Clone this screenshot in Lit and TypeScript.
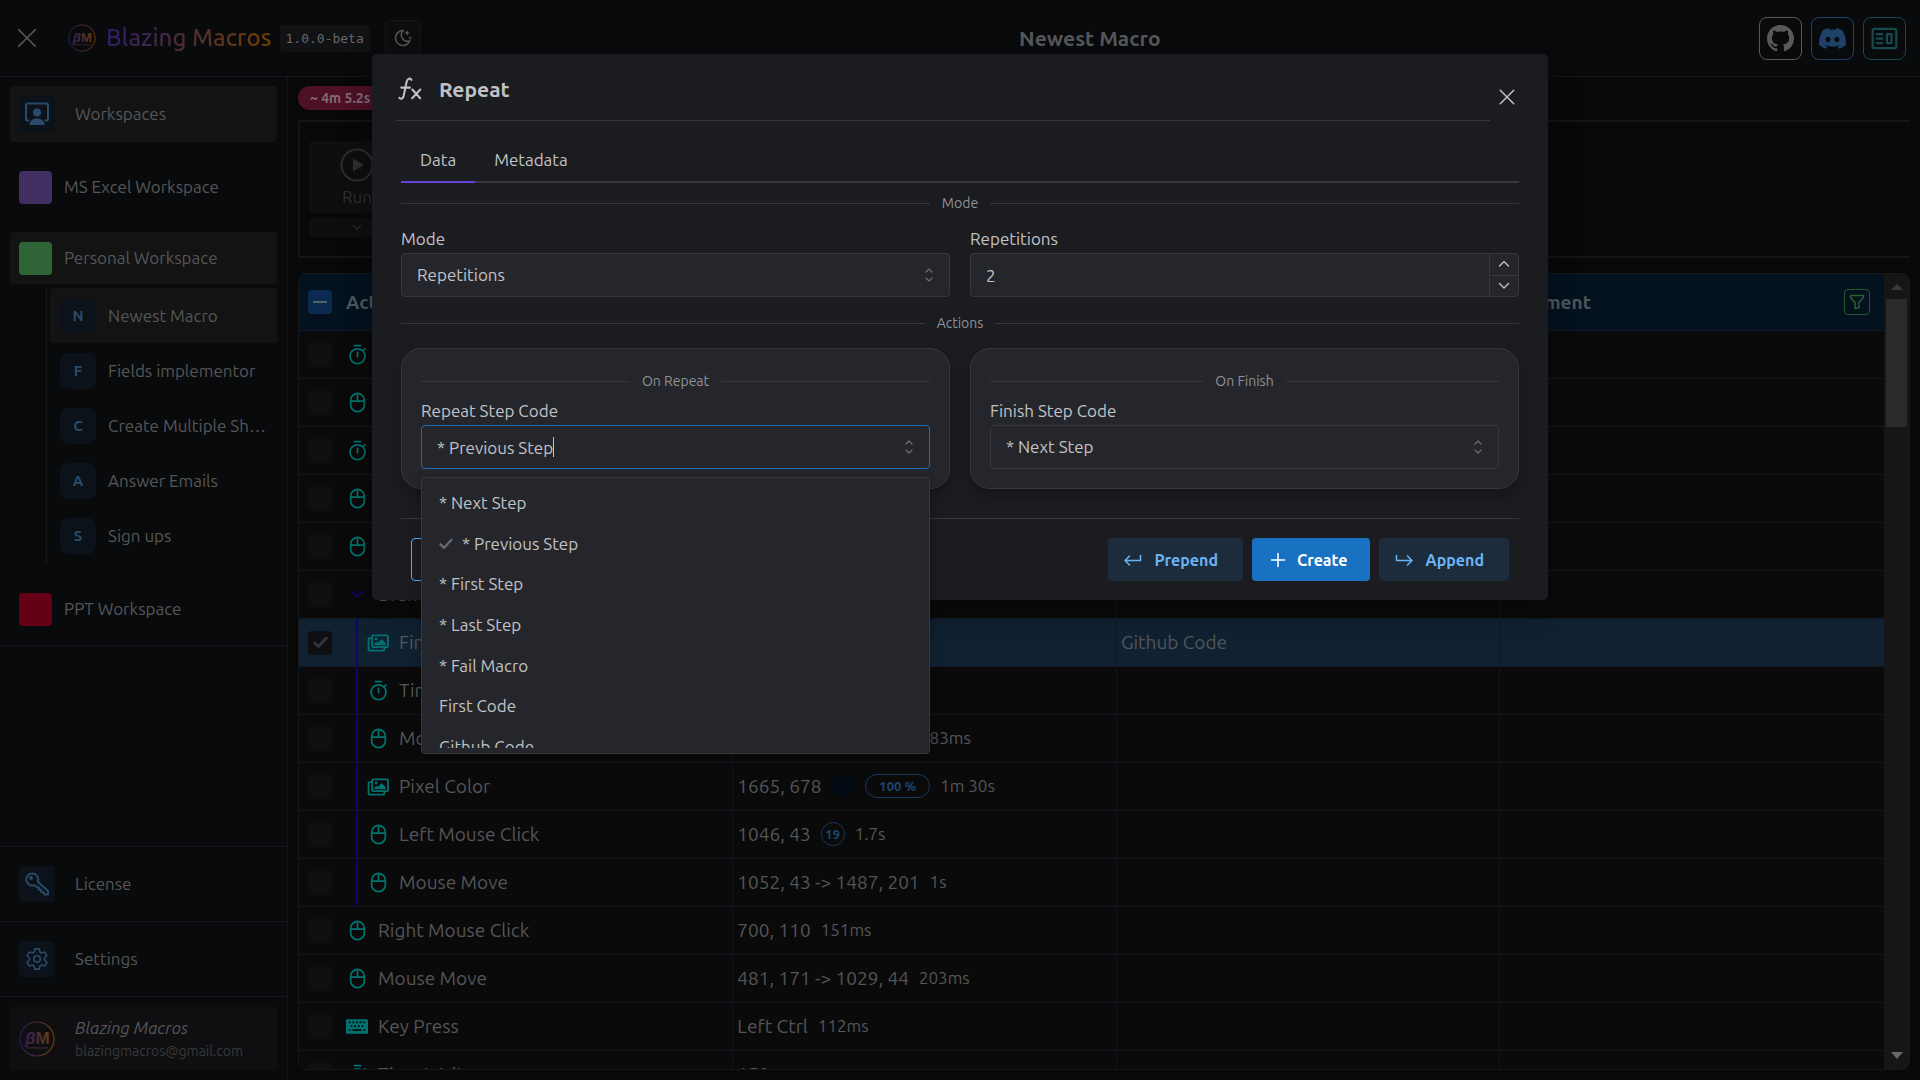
import { LitElement, html, css, svg, nothing, TemplateResult } from "lit";
import { customElement, property, state } from "lit/decorators.js";
import { classMap } from "lit/directives/class-map.js";

const gearPath = (() => {
  const pts: string[] = [];
  for (let i = 0; i < 6; i++) {
    const c = i * 60 - 90;
    for (const [a, r] of [[-24, 6.9], [-12, 9.6], [12, 9.6], [24, 6.9]]) {
      const t = ((c + a) * Math.PI) / 180;
      pts.push(`${(12 + r * Math.cos(t)).toFixed(2)} ${(12 + r * Math.sin(t)).toFixed(2)}`);
    }
  }
  return `M${pts.join("L")}Z`;
})();

const icons: Record<string, { box: string; body: TemplateResult | unknown }> = {
  close: { box: "0 0 24 24", body: svg`<path class="s" d="M3 3 21 21M21 3 3 21"/>` },
  moon: {
    box: "0 0 24 24",
    body: svg`<path class="s" d="M12 3h.4a7.5 7.5 0 0 0 7.9 12.4A9 9 0 1 1 12 3z"/><path class="f" d="M17 2.500l1 2.500 2.500 1-2.500 1-1 2.500-1-2.500-2.500-1 2.500-1zM20.500 9.500l.7 1.800 1.800.7-1.800.7-.7 1.800-.7-1.800-1.800-.7 1.800-.7z"/>`,
  },
  github: {
    box: "0 0 16 16",
    body: svg`<path class="f" d="M8 0C3.58 0 0 3.58 0 8c0 3.54 2.29 6.53 5.47 7.59.4.07.55-.17.55-.38 0-.19-.01-.82-.01-1.49-2.01.37-2.53-.49-2.69-.94-.09-.23-.48-.94-.82-1.13-.28-.15-.68-.52-.01-.53.63-.01 1.08.58 1.23.82.72 1.21 1.87.87 2.33.66.07-.52.28-.87.51-1.07-1.78-.2-3.64-.89-3.64-3.95 0-.87.31-1.59.82-2.15-.08-.2-.36-1.02.08-2.12 0 0 .67-.21 2.2.82.64-.18 1.32-.27 2-.27s1.36.09 2 .27c1.53-1.04 2.2-.82 2.2-.82.44 1.1.16 1.92.08 2.12.51.56.82 1.27.82 2.15 0 3.07-1.87 3.75-3.65 3.95.29.25.54.73.54 1.48 0 1.07-.01 1.93-.01 2.2 0 .21.15.46.55.38A8.01 8.01 0 0 0 16 8c0-4.42-3.58-8-8-8"/>`,
  },
  discord: {
    box: "0 0 16 16",
    body: svg`<path class="f" d="M13.545 2.907a13.2 13.2 0 0 0-3.257-1.011.05.05 0 0 0-.052.025c-.141.25-.297.577-.406.833a12.2 12.2 0 0 0-3.658 0 8 8 0 0 0-.412-.833.05.05 0 0 0-.052-.025c-1.125.194-2.22.534-3.257 1.011a.04.04 0 0 0-.021.018C.356 6.024-.213 9.047.066 12.032q.003.022.021.037a13.3 13.3 0 0 0 3.995 2.02.05.05 0 0 0 .056-.019q.463-.63.818-1.329a.05.05 0 0 0-.01-.059l-.018-.011a9 9 0 0 1-1.248-.595.05.05 0 0 1-.02-.066l.015-.019q.127-.095.248-.195a.05.05 0 0 1 .051-.007c2.619 1.196 5.454 1.196 8.041 0a.05.05 0 0 1 .053.007q.121.1.248.195a.05.05 0 0 1-.004.085 8 8 0 0 1-1.249.594.05.05 0 0 0-.03.03.05.05 0 0 0 .003.041c.24.465.515.909.817 1.329a.05.05 0 0 0 .056.019 13.2 13.2 0 0 0 4.001-2.02.05.05 0 0 0 .021-.037c.334-3.451-.559-6.449-2.366-9.106a.03.03 0 0 0-.02-.019m-8.198 7.307c-.789 0-1.438-.724-1.438-1.612s.637-1.613 1.438-1.613c.807 0 1.45.73 1.438 1.613 0 .888-.637 1.612-1.438 1.612m5.316 0c-.788 0-1.438-.724-1.438-1.612s.637-1.613 1.438-1.613c.807 0 1.451.73 1.438 1.613 0 .888-.631 1.612-1.438 1.612"/>`,
  },
  news: {
    box: "0 0 24 24",
    body: svg`<rect class="s" x="1.500" y="3.500" width="21" height="17" rx="1.500"/><path class="s" d="M5 8h5M5 12h5M5 16h5"/><rect class="s" x="14.200" y="8" width="4" height="8"/>`,
  },
  workspaces: {
    box: "0 0 24 24",
    body: svg`<path class="s" d="M3.500 18.500h-1a1.500 1.500 0 0 1-1.500-1.500V3a1.500 1.500 0 0 1 1.500-1.500h19A1.500 1.500 0 0 1 23 3v14a1.500 1.500 0 0 1-1.500 1.500h-1"/><circle class="f" cx="12" cy="10.500" r="4"/><path class="f" d="M4.500 23c0-4 3-6.500 7.500-6.500s7.500 2.500 7.500 6.500z"/>`,
  },
  key: {
    box: "0 0 24 24",
    body: svg`<path class="s" d="M12.800 9.800a6 6 0 1 0-3.300 3.300l2.200 2.200h2v2.500h2.500v2.400h2.300l1 2.300H23v-3.500z"/><circle class="f" cx="6" cy="6" r="2"/>`,
  },
  gear: { box: "0 0 24 24", body: svg`<path class="s" d=${gearPath}/><circle class="s" cx="12" cy="12" r="3"/>` },
  play: { box: "0 0 34 34", body: svg`<circle class="s" cx="17" cy="17" r="15.500"/><path class="f" d="M13 10.500v13L24 17z"/>` },
  chevron: { box: "0 0 12 8", body: svg`<path class="s" d="M1.500 1.500 6 6 10.500 1.500"/>` },
  chevronUp: { box: "0 0 12 8", body: svg`<path class="s" d="M1.500 6 6 1.500 10.500 6"/>` },
  selector: { box: "0 0 10 16", body: svg`<path class="s" d="M2 5 5 2 8 5M2 11 5 14 8 11"/>` },
  stopwatch: {
    box: "0 0 24 24",
    body: svg`<circle class="s" cx="12" cy="14" r="8.500"/><path class="s" d="M12 9.500v5M8.500 1.800h7M18 8l2.500-2.500"/>`,
  },
  mouse: {
    box: "0 0 24 24",
    body: svg`<rect class="s" x="4.200" y="1.500" width="15.600" height="21" rx="7.800"/><path class="s" d="M4.500 10.300h15M12 2v8.300"/>`,
  },
  images: {
    box: "0 0 24 20",
    body: svg`<rect class="s" x="5.500" y="1.500" width="17.500" height="13" rx="1"/><path class="s" d="M5 4.500H2.500A1 1 0 0 0 1.500 5.500v12a1 1 0 0 0 1 1h15.500a1 1 0 0 0 1-1V15"/><circle class="f" cx="10" cy="5.500" r="1.600"/><path class="f" d="M8 12.500v-2l2.500-2 1.500 1.300 4-4.300 4.500 4.500v2.500z"/>`,
  },
  keyboard: {
    box: "0 0 24 18",
    body: svg`<path class="f" fill-rule="evenodd" d="M1.500 1h21A1.500 1.500 0 0 1 24 2.500v13a1.500 1.500 0 0 1-1.500 1.500h-21A1.500 1.500 0 0 1 0 15.500v-13A1.500 1.500 0 0 1 1.500 1zM3 3.500v2h2v-2zM7 3.500v2h2v-2zM11 3.500v2h2v-2zM15 3.500v2h2v-2zM19 3.500v2h2v-2zM5 7.500v2h2v-2zM9 7.500v2h2v-2zM13 7.500v2h2v-2zM17 7.500v2h2v-2zM3 12v2h2v-2zM7 12v2h10v-2zM19 12v2h2v-2z"/>`,
  },
  filter: { box: "0 0 16 16", body: svg`<path class="s" d="M1.500 1.500h13v1.800L10 8.500V13.500l-4 1V8.500L1.500 3.300z"/>` },
  fx: {
    box: "0 0 26 26",
    body: svg`<path class="s" d="M1.500 22.500c.5 1.500 3.500 2 4.500-1.500L9.300 5.500C10 1.500 13.500.8 14.500 3.200M3.500 11.500h9.500M15.500 13.500l8.500 9.500M24.200 13.500 15.300 23"/>`,
  },
  tick: { box: "0 0 14 12", body: svg`<path class="s" d="M1.500 6.300 5 9.800 12.500 1.800"/>` },
  back: { box: "0 0 18 14", body: svg`<path class="s" d="M5.500 3 1 7.500 5.500 12M1 7.500h15.500V2.500"/>` },
  forward: { box: "0 0 18 14", body: svg`<path class="s" d="M12.500 3 17 7.500 12.500 12M17 7.500H1.500V2.500"/>` },
  plus: { box: "0 0 14 14", body: svg`<path class="s" d="M7 .5v13M.5 7h13"/>` },
};

@customElement("bm-icon")
export class BmIcon extends LitElement {
  @property() name = "";
  @property({ type: Number }) width = 24;
  @property({ type: Number }) height = 0;
  @property({ type: Number }) stroke = 2;

  static styles = css`
    :host { display: inline-flex; flex: none; }
    svg { display: block; overflow: visible; }
    .s { fill: none; stroke: currentColor; stroke-linecap: round; stroke-linejoin: round; }
    .f { fill: currentColor; }
  `;

  render() {
    const icon = icons[this.name];
    if (!icon) return nothing;
    return html`<svg
      width=${this.width}
      height=${this.height || this.width}
      viewBox=${icon.box}
      stroke-width=${this.stroke}
      aria-hidden="true"
    >${icon.body}</svg>`;
  }
}

@customElement("bm-logo")
export class BmLogo extends LitElement {
  @property({ type: Number }) size = 28;

  static styles = css`
    :host { display: inline-flex; flex: none; }
    svg { display: block; }
    text { font-family: "Liberation Sans", sans-serif; font-weight: 700; font-size: 17px; }
  `;

  render() {
    return html`<svg width=${this.size} height=${this.size} viewBox="0 0 36 36" role="img" aria-label="Blazing Macros">
      <defs>
        <linearGradient id="g" x1="2" y1="0" x2="34" y2="0" gradientUnits="userSpaceOnUse">
          <stop offset="0" stop-color="#2b1a55" />
          <stop offset="0.500" stop-color="#4a2c3a" />
          <stop offset="1" stop-color="#6b3d06" />
        </linearGradient>
      </defs>
      <circle cx="18" cy="18" r="17" fill="none" stroke="url(#g)" stroke-width="1.200" />
      <text x="6" y="22.500" fill="url(#g)"><tspan font-style="italic">β</tspan>M</text>
      <path d="M8 20 5.500 26.500 11 21z" fill="url(#g)" />
      <path d="M8 26.800H29" stroke="#4a2c3a" stroke-width="1.200" stroke-dasharray="2 .7" />
    </svg>`;
  }
}

interface Row {
  icon: string;
  name: string;
  data?: string;
  time?: string;
  color?: string;
  pill?: string;
  code?: string;
  child?: boolean;
  group?: boolean;
  selected?: boolean;
}

const rows: Row[] = [
  { icon: "stopwatch", name: "Time Wait" },
  { icon: "mouse", name: "Mouse Move" },
  { icon: "stopwatch", name: "Time Wait" },
  { icon: "mouse", name: "Mouse Move" },
  { icon: "mouse", name: "Mouse Move" },
  { icon: "chevron", name: "Branch", group: true },
  { icon: "images", name: "Find Image", code: "Github Code", child: true, selected: true },
  { icon: "stopwatch", name: "Time Wait", child: true },
  { icon: "mouse", name: "Mouse Move", data: "1665, 678 -> 1046, 43", time: "83ms", child: true },
  { icon: "images", name: "Pixel Color", data: "1665, 678", color: "#040b14", pill: "100 %", time: "1m 30s", child: true },
  { icon: "mouse", name: "Left Mouse Click", data: "1046, 43", pill: "19", time: "1.7s", child: true },
  { icon: "mouse", name: "Mouse Move", data: "1052, 43 -> 1487, 201", time: "1s", child: true },
  { icon: "mouse", name: "Right Mouse Click", data: "700, 110", time: "151ms" },
  { icon: "mouse", name: "Mouse Move", data: "481, 171 -> 1029, 44", time: "203ms" },
  { icon: "keyboard", name: "Key Press", data: "Left Ctrl", time: "112ms" },
  { icon: "stopwatch", name: "Time Wait", data: "150ms" },
];

const macros = ["Newest Macro", "Fields implementor", "Create Multiple Sheets", "Answer Emails", "Sign ups"];
const steps = ["* Next Step", "* Previous Step", "* First Step", "* Last Step", "* Fail Macro", "First Code", "Github Code"];

@customElement("macro-table")
export class MacroTable extends LitElement {
  static styles = css`
    :host { display: flex; flex: 1; min-height: 0; min-width: 0; }
    * { box-sizing: border-box; }
    .frame { display: flex; flex: 1; min-width: 0; border: 1px solid #14191f; border-radius: 8px; overflow: hidden; }
    .view { flex: 1; min-width: 0; overflow: hidden; }
    table { width: 100%; table-layout: fixed; border-collapse: separate; border-spacing: 0; color: #545557; font-size: 19px; line-height: 24px; }
    .side { width: 24.2%; }
    th { height: 57px; padding: 0 14px 0 4px; background: #04111e; border-bottom: 1px solid #0f1a2a; text-align: left; font-weight: 600; color: #4e565d; }
    td { height: 48px; padding: 0 4px 1px; background: #0a0a0b; border-bottom: 1px solid #111822; border-right: 1px solid #11161d; white-space: nowrap; overflow: hidden; }
    td:last-child { border-right: 0; }
    .on td { background: #102132; border-bottom-color: #111a24; }
    th.first { padding-left: 9px; }
    td.first { padding: 0 0 0 9px; }
    .line { display: flex; align-items: center; height: 47px; }
    .label { padding-bottom: 1px; }
    .head { display: flex; align-items: center; gap: 14px; }
    .spread { display: flex; align-items: center; justify-content: space-between; }
    .check { position: relative; display: grid; place-items: center; width: 24px; height: 24px; flex: none; color: #343538; }
    .check > * { grid-area: 1 / 1; }
    input { appearance: none; margin: 0; width: 24px; height: 24px; border-radius: 4px; background: #0f0f11; }
    .all { background: #0a2b4f; }
    .bar { width: 14px; height: 2px; background: #56626d; z-index: 1; }
    .check bm-icon { z-index: 1; }
    .icon { display: flex; justify-content: center; width: 24px; margin-left: 13px; margin-right: 9px; color: #007370; }
    .group .icon { color: #1c0078; }
    .rail { align-self: stretch; width: 2px; margin-left: 24px; background: #160070; }
    .rail + .icon { margin-left: 8px; }
    .data { display: flex; align-items: center; gap: 10px; }
    .time { font-size: 17px; }
    .swatch { width: 24px; height: 24px; border-radius: 50%; }
    .pill { display: grid; place-items: center; height: 24px; min-width: 24px; padding: 0 13px; border: 1px solid #17395c; border-radius: 12px; color: #1d4670; font-size: 13px; line-height: 20px; font-weight: 700; }
    .round { padding: 0; }
    .filter { display: grid; place-items: center; width: 26px; height: 26px; padding: 0; border: 1px solid #24562c; border-radius: 4px; background: none; color: #2a6132; }
    .scroll { display: flex; flex-direction: column; align-items: center; width: 25px; padding: 10px 0; background: #161617; }
    .up { border: 6px solid transparent; border-top: 0; border-bottom-color: #3a3a3a; }
    .down { margin-top: auto; border: 6px solid transparent; border-bottom: 0; border-top: 7px solid #666; }
    .thumb { width: 21px; height: 16.5%; margin-top: 9px; background: #2a2a2b; }
  `;

  row(r: Row) {
    return html`<tr class=${classMap({ on: !!r.selected, group: !!r.group })}>
      <td class="first">
        <div class="line">
          <span class="check">
            <input type="checkbox" aria-label="Select ${r.name}" .checked=${!!r.selected} />
            ${r.selected ? html`<bm-icon name="tick" width="15" height="13" .stroke=${2.6}></bm-icon>` : nothing}
          </span>
          ${r.child ? html`<span class="rail"></span>` : nothing}
          <span class="icon">
            ${r.group
              ? html`<bm-icon name="chevron" width="14" height="9" .stroke=${1.5}></bm-icon>`
              : html`<bm-icon
                  name=${r.icon}
                  width=${r.icon === "images" || r.icon === "keyboard" ? 22 : 21}
                  height=${r.icon === "images" ? 18 : r.icon === "keyboard" ? 17 : 21}
                ></bm-icon>`}
          </span>
          <span class="label">${r.name}</span>
        </div>
      </td>
      <td>
        <div class="data">
          ${r.data ?? nothing}
          ${r.color ? html`<span class="swatch" style="background:${r.color}"></span>` : nothing}
          ${r.pill ? html`<span class=${classMap({ pill: true, round: r.pill.length < 3 })}>${r.pill}</span>` : nothing}
          ${r.time ? html`<span class="time">${r.time}</span>` : nothing}
        </div>
      </td>
      <td>${r.code ?? nothing}</td>
      <td></td>
    </tr>`;
  }

  render() {
    return html`<div class="frame">
      <div class="view">
        <table>
          <colgroup><col /><col class="side" /><col class="side" /><col class="side" /></colgroup>
          <thead>
            <tr>
              <th class="first">
                <div class="head">
                  <span class="check"><input class="all" type="checkbox" aria-label="Select all" /><span class="bar"></span></span>
                  Action
                </div>
              </th>
              <th>Data</th>
              <th>Code</th>
              <th>
                <div class="spread">
                  Comment
                  <button class="filter" aria-label="Filter"><bm-icon name="filter" width="16" .stroke=${1.5}></bm-icon></button>
                </div>
              </th>
            </tr>
          </thead>
          <tbody>${rows.map((r) => this.row(r))}</tbody>
        </table>
      </div>
      <div class="scroll"><span class="up"></span><span class="thumb"></span><span class="down"></span></div>
    </div>`;
  }
}

@customElement("side-nav")
export class SideNav extends LitElement {
  static styles = css`
    :host { display: flex; flex-direction: column; width: 288px; flex: none; border-right: 1px solid #141518; background: #090a0c; color: #555658; font-size: 17px; line-height: 24px; }
    * { box-sizing: border-box; }
    a { color: inherit; text-decoration: none; display: flex; align-items: center; border-radius: 4px; }
    .top { display: flex; flex-direction: column; padding: 9px 10px 10px; border-bottom: 1px solid #141518; }
    .main { height: 56px; gap: 20px; padding-left: 9px; }
    .main.on, .space.on, .macro.on { background: #131314; }
    .tile { display: grid; place-items: center; width: 36px; height: 36px; border-radius: 4px; background: #0b1219; color: #294b69; flex: none; }
    .space { height: 52px; gap: 12px; padding-left: 9px; margin-top: 19px; }
    .swatch { width: 33px; height: 33px; border-radius: 4px; }
    .list { display: grid; grid-auto-rows: 1fr; min-height: 276px; margin: 4px 0 0 36px; padding-left: 3px; border-left: 1px solid #18191b; }
    .macro { gap: 12px; padding-left: 10px; padding-right: 10px; min-width: 0; }
    .letter { border-radius: 8px; font-size: 15px; font-weight: 700; }
    .text { overflow: hidden; text-overflow: ellipsis; white-space: nowrap; }
    .link { height: 74px; margin: 0 10px; gap: 20px; padding-left: 9px; }
    .band { border-top: 1px solid #141518; }
    .push { margin-top: auto; }
    .user { border-top: 1px solid #141518; padding: 10px; }
    .card { display: flex; align-items: center; gap: 20px; height: 63px; padding-left: 9px; background: #0f0f11; }
    .who { display: flex; flex-direction: column; }
    .name { font-style: italic; line-height: 24px; }
    .mail { font-size: 14px; line-height: 22px; color: #38393b; }
  `;

  space(name: string, color: string, on = false) {
    return html`<a href="#" class=${classMap({ space: true, on })}><span class="swatch" style="background:${color}"></span>${name}</a>`;
  }

  render() {
    return html`
      <nav class="top">
        <a href="#" class="main on"><span class="tile"><bm-icon name="workspaces" width="24"></bm-icon></span>Workspaces</a>
        ${this.space("MS Excel Workspace", "#412f62")}
        ${this.space("Personal Workspace", "#2f6536", true)}
        <div class="list">
          ${macros.map(
            (m, i) => html`<a href="#" class=${classMap({ macro: true, on: i === 0 })}>
              <span class="tile letter">${m[0]}</span><span class="text">${m}</span>
            </a>`
          )}
        </div>
        ${this.space("PPT Workspace", "#640015")}
      </nav>
      <div class="band push"><a href="#" class="link"><span class="tile"><bm-icon name="key" width="24"></bm-icon></span>License</a></div>
      <div class="band"><a href="#" class="link"><span class="tile"><bm-icon name="gear" width="26" .stroke=${1.5}></bm-icon></span>Settings</a></div>
      <div class="user">
        <div class="card">
          <bm-logo size="36"></bm-logo>
          <div class="who"><span class="name">Blazing Macros</span><span class="mail">blazingmacros@gmail.com</span></div>
        </div>
      </div>
    `;
  }
}

@customElement("repeat-dialog")
export class RepeatDialog extends LitElement {
  @state() private step = "* Previous Step";

  static styles = css`
    :host { display: block; width: 1176px; max-width: 100%; background: #1b1c20; border-radius: 5px; color: #c1c2c5; font-size: 17px; line-height: 24px; box-shadow: 0 10px 30px rgba(0, 0, 0, 0.300); }
    * { box-sizing: border-box; }
    .head { display: flex; align-items: flex-start; padding: 0 24px 0 24px; }
    .title { display: flex; flex: 1; align-items: center; gap: 17px; height: 67px; padding: 3px 0 0 2px; border-bottom: 1px solid #37383e; }
    h2 { margin: 0; font-size: 21px; line-height: 28px; font-weight: 700; }
    .x { display: grid; place-items: center; width: 34px; height: 34px; margin-top: 26px; padding: 0; border: 0; background: none; color: #c1c2c5; }
    .body { padding: 21px 29px 0; }
    .tabs { display: flex; margin-bottom: 9px; border-bottom: 2px solid #37383e; }
    .tab { height: 41px; margin-bottom: -2px; padding: 0 19px 3px; border: 0; border-bottom: 2px solid transparent; background: none; color: #c1c2c5; font: inherit; }
    .tab.on { border-bottom-color: #6741d9; }
    .rule { display: flex; align-items: center; gap: 12px; height: 22px; color: #909296; font-size: 14px; line-height: 22px; }
    .rule::before, .rule::after { content: ""; flex: 1; height: 1px; background: #37383e; }
    .two { display: grid; grid-template-columns: 1fr 1fr; gap: 20px; }
    .modes { margin-top: 13px; margin-bottom: 15px; }
    label { display: block; line-height: 24px; }
    .field { display: block; margin-top: 2px; }
    .control { position: relative; display: flex; align-items: center; height: 44px; border: 1px solid #37383e; border-radius: 4px; background: #25262b; overflow: hidden; }
    .control.focus { border-color: #1c6cb5; }
    select, input { appearance: none; flex: 1; min-width: 0; height: 100%; border: 0; padding: 0 15px; margin: 0; background: none; color: #c1c2c5; font: inherit; outline: none; }
    .combo { flex: none; padding: 0 0 0 15px; field-sizing: content; }
    .caret { width: 1px; height: 20px; background: #c1c2c5; margin-right: auto; }
    .arrows { position: absolute; right: 15px; color: #6a6b70; pointer-events: none; }
    .control .arrows.flow { position: static; margin-right: 15px; }
    .spin { display: grid; width: 29px; height: 100%; border-left: 1px solid #37383e; }
    .spin button { display: grid; place-items: center; border: 0; padding: 0; background: none; color: #c1c2c5; }
    .spin button + button { border-top: 1px solid #37383e; }
    .cards { margin-top: 14px; }
    .card { padding: 21px 19px 19px; border: 1px solid #37383e; border-radius: 20px; background: #25262b; box-shadow: 0 8px 10px rgba(0, 0, 0, 0.200); }
    .card label { margin-top: 7px; }
    .anchor { position: relative; }
    .menu { position: absolute; z-index: 2; top: 52px; left: 0; right: 0; height: 277px; padding: 5px 0; border: 1px solid #37383e; border-radius: 4px; background: #25262b; box-shadow: 0 4px 12px rgba(0, 0, 0, 0.250); }
    .scroller { height: 265px; overflow: hidden; }
    ul { display: grid; grid-auto-rows: 1fr; height: 284px; margin: 0; padding: 0 17px; list-style: none; }
    li { display: flex; align-items: center; gap: 9px; }
    li bm-icon { color: #68696d; }
    .foot { display: flex; align-items: center; gap: 9px; margin-top: 29px; padding: 19px 10px; border-top: 1px solid #37383e; }
    .btn { display: flex; align-items: center; gap: 12px; height: 43px; padding: 0 24px 0 15px; border: 1px solid transparent; border-radius: 4px; font-family: inherit; font-size: 16px; font-weight: 700; background: #1c2c3c; color: #6ab4f4; }
    .main { background: #1971c2; color: #fff; padding-left: 18px; padding-right: 22px; }
    .line { background: none; border-color: #4dabf7; margin-right: auto; padding: 0 22px; }
  `;

  render() {
    return html`
      <div class="head">
        <div class="title"><bm-icon name="fx" width="24" .stroke=${2.2}></bm-icon><h2>Repeat</h2></div>
        <button class="x" aria-label="Close"><bm-icon name="close" width="18" .stroke=${2}></bm-icon></button>
      </div>
      <div class="body">
        <div class="tabs" role="tablist">
          <button class="tab on" role="tab" aria-selected="true">Data</button>
          <button class="tab" role="tab" aria-selected="false">Metadata</button>
        </div>
        <div class="rule">Mode</div>
        <div class="two modes">
          <div>
            <label for="mode">Mode</label>
            <div class="field control">
              <select id="mode"><option>Repetitions</option></select>
              <bm-icon class="arrows" name="selector" width="10" height="16" .stroke=${1.3}></bm-icon>
            </div>
          </div>
          <div>
            <label for="count">Repetitions</label>
            <div class="field control">
              <input id="count" type="text" inputmode="numeric" value="2" />
              <span class="spin">
                <button aria-label="Increase"><bm-icon name="chevronUp" width="12" height="8" .stroke=${1.4}></bm-icon></button>
                <button aria-label="Decrease"><bm-icon name="chevron" width="12" height="8" .stroke=${1.4}></bm-icon></button>
              </span>
            </div>
          </div>
        </div>
        <div class="rule">Actions</div>
        <div class="two cards">
          <section class="card">
            <div class="rule">On Repeat</div>
            <label for="repeat">Repeat Step Code</label>
            <div class="anchor">
              <div class="field control focus">
                <input id="repeat" class="combo" role="combobox" aria-expanded="true" .value=${this.step} />
                <span class="caret"></span>
                <bm-icon class="arrows flow" name="selector" width="10" height="16" .stroke=${1.3}></bm-icon>
              </div>
              <div class="menu">
                <div class="scroller">
                  <ul role="listbox">
                    ${steps.map(
                      (s) => html`<li role="option" aria-selected=${s === this.step} @click=${() => (this.step = s)}>
                        ${s === this.step ? html`<bm-icon name="tick" width="14" height="12" .stroke=${2.4}></bm-icon>` : nothing}${s}
                      </li>`
                    )}
                  </ul>
                </div>
              </div>
            </div>
          </section>
          <section class="card">
            <div class="rule">On Finish</div>
            <label for="finish">Finish Step Code</label>
            <div class="field control">
              <select id="finish"><option>* Next Step</option></select>
              <bm-icon class="arrows" name="selector" width="10" height="16" .stroke=${1.3}></bm-icon>
            </div>
          </section>
        </div>
        <div class="foot">
          <button class="btn line">Cancel</button>
          <button class="btn"><bm-icon name="back" width="18" height="14" .stroke=${1.5}></bm-icon>Prepend</button>
          <button class="btn main"><bm-icon name="plus" width="14" .stroke=${1.5}></bm-icon>Create</button>
          <button class="btn"><bm-icon name="forward" width="18" height="14" .stroke=${1.5}></bm-icon>Append</button>
        </div>
      </div>
    `;
  }
}

@customElement("app-root")
export class AppRoot extends LitElement {
  static styles = css`
    :host { display: flex; flex-direction: column; height: 100vh; position: relative; overflow: hidden; background: #080808; color: #555658; font-family: Ubuntu, "Noto Sans", sans-serif; font-size: 17px; line-height: 24px; }
    * { box-sizing: border-box; }
    header { display: flex; align-items: center; justify-content: space-between; height: 77px; flex: none; padding: 0 14px 0 10px; border-bottom: 1px solid #141518; background: #090a0c; }
    .brand, .links { display: flex; align-items: center; }
    button { font: inherit; color: inherit; padding: 0; background: none; border: 0; display: grid; place-items: center; }
    .x { width: 34px; height: 34px; margin-right: 24px; color: #58595b; }
    .name { margin: 0 8px 0 10px; font-size: 24px; line-height: 32px; font-weight: 500; background: linear-gradient(90deg, #2e1c66, #6e3f00); background-clip: text; color: transparent; }
    .ver { padding: 0 6px; border-radius: 4px; background: #111214; color: #666769; font: 13px/27px "DejaVu Sans Mono", monospace; margin-right: 15px; }
    .moon { width: 36px; height: 36px; border: 1px solid #151618; border-radius: 4px; background: #0c0d0f; }
    h1 { margin: 0; font-size: 21px; line-height: 32px; font-weight: 600; color: #56575a; }
    .links { gap: 9px; }
    .links a { display: grid; place-items: center; width: 43px; height: 43px; border: 1px solid currentColor; border-radius: 8px; color: #58595b; }
    .links .d { color: #1e4268; }
    .links .n { color: #17494e; }
    .below { display: flex; flex: 1; min-height: 0; }
    main { display: flex; flex-direction: column; flex: 1; min-width: 0; padding: 9px 10px 10px; }
    .pill { align-self: flex-start; height: 24px; padding: 0 12px; border-radius: 12px; background: #4d1027; color: #80696f; font-size: 14px; line-height: 24px; font-weight: 700; }
    .tools { display: flex; height: 138px; margin: 10px 0 15px; padding: 19px 9px; border: 2px solid #131417; border-right: 0; flex: none; }
    .tool { display: flex; flex-direction: column; gap: 5px; width: 96px; color: #2c2d2f; }
    .run { display: flex; flex-direction: column; align-items: center; gap: 3px; width: 100%; height: 72px; padding-top: 7px; border-radius: 4px; background: #0e0e0f; }
    .more { width: 100%; height: 19px; border-radius: 4px; background: #0e0e0f; }
    .layer { position: absolute; inset: 5vh 0 auto; display: flex; justify-content: center; }
  `;

  render() {
    return html`
      <header>
        <div class="brand">
          <button class="x" aria-label="Close menu"><bm-icon name="close" width="22" .stroke=${1.8}></bm-icon></button>
          <bm-logo size="28"></bm-logo>
          <span class="name">Blazing Macros</span>
          <code class="ver">1.0.0-beta</code>
          <button class="moon" aria-label="Colour scheme"><bm-icon name="moon" width="20" .stroke=${1.8}></bm-icon></button>
        </div>
        <h1>Newest Macro</h1>
        <div class="links">
          <a href="#" aria-label="GitHub"><bm-icon name="github" width="27"></bm-icon></a>
          <a href="#" class="d" aria-label="Discord"><bm-icon name="discord" width="27"></bm-icon></a>
          <a href="#" class="n" aria-label="News"><bm-icon name="news" width="27"></bm-icon></a>
        </div>
      </header>
      <div class="below">
        <side-nav></side-nav>
        <main>
          <span class="pill">~ 4m 5.2s</span>
          <div class="tools">
            <div class="tool">
              <button class="run"><bm-icon name="play" width="34"></bm-icon>Run</button>
              <button class="more" aria-label="More run options"><bm-icon name="chevron" width="10" height="7" .stroke=${1.5}></bm-icon></button>
            </div>
          </div>
          <macro-table></macro-table>
        </main>
      </div>
      <div class="layer"><repeat-dialog role="dialog" aria-label="Repeat"></repeat-dialog></div>
    `;
  }
}
